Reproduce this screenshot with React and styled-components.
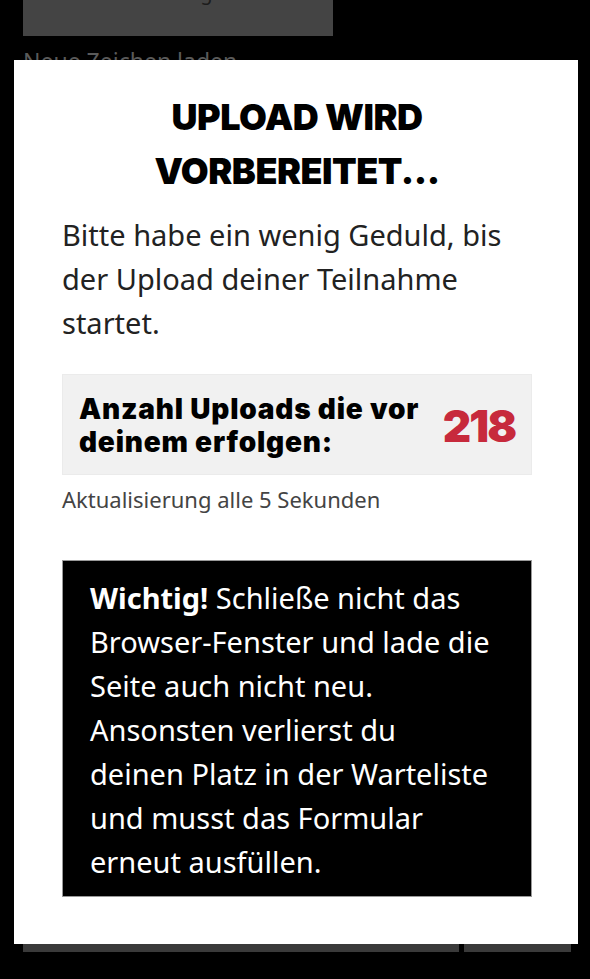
import styled, { createGlobalStyle } from "styled-components";

const GlobalStyle = createGlobalStyle`
  html, body {
    margin: 0;
    padding: 0;
    background: #000;
  }
  body {
    font-family: "Noto Sans", "Open Sans", sans-serif;
  }
`;

const App = () => {
  return (
    <>
      <GlobalStyle />
      <$Page>
        <$PageButton>Zeichnung</$PageButton>
        <$PageLink>Neue Zeichen laden</$PageLink>
        <$Spacer />
        <$PageActions>
          <$PageAction grow />
          <$PageAction width="107px" />
        </$PageActions>
      </$Page>

      <$Modal>
        <$Title>Upload wird vorbereitet...</$Title>
        <$Text>
          Bitte habe ein wenig Geduld, bis der Upload deiner Teilnahme startet.
        </$Text>

        <$Queue>
          <$QueueLabel>Anzahl Uploads die vor deinem erfolgen:</$QueueLabel>
          <$QueueCount>218</$QueueCount>
        </$Queue>
        <$Hint>Aktualisierung alle 5 Sekunden</$Hint>

        <$Notice>
          <strong>Wichtig!</strong> Schließe nicht das Browser-Fenster und lade
          die Seite auch nicht neu. Ansonsten verlierst du deinen Platz in der
          Warteliste und musst das Formular erneut ausfüllen.
        </$Notice>
      </$Modal>
    </>
  );
};

export default App;

const $Page = styled.div`
  display: flex;
  flex-direction: column;
  height: 979px;
  padding: 0 19px 0 23px;
  box-sizing: border-box;
  overflow: hidden;
`;

const $PageButton = styled.div`
  display: flex;
  align-items: flex-end;
  justify-content: center;
  width: 310px;
  height: 36px;
  box-sizing: border-box;
  padding: 0 30px 31px 0;
  background: #444;
  color: #1c1c1c;
  font-size: 20px;
  line-height: 24px;
  overflow: hidden;
`;

const $PageLink = styled.div`
  margin-top: 11px;
  color: #5a5a5a;
  font-size: 23px;
  line-height: 28px;
`;

const $Spacer = styled.div`
  flex: 1;
`;

const $PageActions = styled.div`
  display: flex;
  gap: 5px;
  margin-bottom: 27px;
`;

const $PageAction = styled.div`
  height: 50px;
  background: #3a3a3a;
  flex: ${(p) => (p.grow ? 1 : "none")};
  width: ${(p) => p.width || "auto"};
`;

const $Modal = styled.div`
  position: fixed;
  top: 60px;
  left: 14px;
  width: 564px;
  height: 884px;
  box-sizing: border-box;
  padding: 30px 46px 0 48px;
  background: #fff;
`;

const $Title = styled.h2`
  margin: 0 0 15px;
  padding: 0 50px;
  font-family: Inter, sans-serif;
  font-weight: 900;
  font-size: 36px;
  line-height: 54px;
  letter-spacing: -0.5px;
  text-transform: uppercase;
  text-align: center;
  color: #000;
`;

const $Text = styled.p`
  margin: 0 0 29px;
  font-size: 29px;
  line-height: 44px;
  color: #222;
`;

const $Queue = styled.div`
  display: flex;
  align-items: center;
  justify-content: space-between;
  gap: 14px;
  height: 101px;
  box-sizing: border-box;
  padding: 2px 16px 0;
  background: #f1f1f1;
  border: 1px solid #ebebeb;
`;

const $QueueLabel = styled.div`
  font-family: Inter, sans-serif;
  font-weight: 900;
  font-size: 28px;
  line-height: 33px;
  letter-spacing: 0.8px;
  color: #000;
`;

const $QueueCount = styled.div`
  font-family: Inter, sans-serif;
  font-weight: 900;
  font-size: 44px;
  letter-spacing: -2px;
  color: #c72a3c;
`;

const $Hint = styled.div`
  margin: 11px 0 48px;
  font-size: 22px;
  line-height: 26px;
  color: #444;
`;

const $Notice = styled.div`
  padding: 15px 36px 12px 27px;
  background: #000;
  border: 1px solid #999;
  color: #fff;
  font-size: 29px;
  line-height: 44px;

  strong {
    font-weight: 700;
  }
`;
